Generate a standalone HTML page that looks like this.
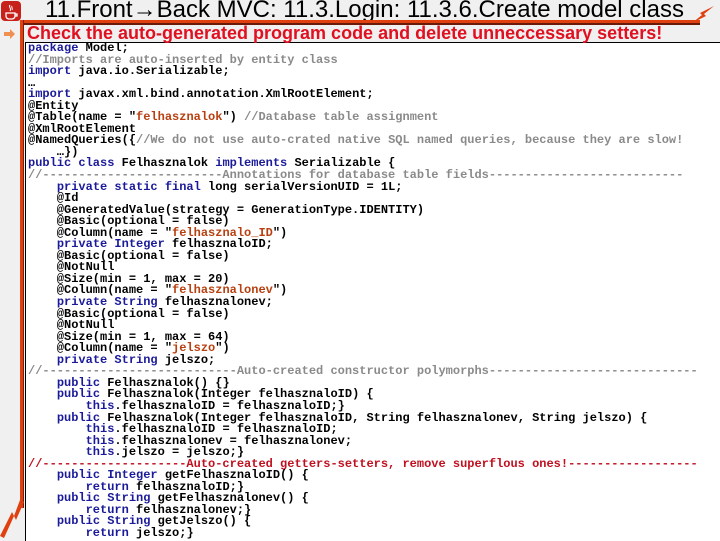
<!DOCTYPE html>
<html><head><meta charset="utf-8"><style>
body{margin:0;width:720px;height:540px;overflow:hidden;background:#f0f0f0;position:relative;font-family:"Liberation Sans",sans-serif}
.title{position:absolute;left:45px;top:-4px;font-size:24px;color:#000;white-space:nowrap}
.hl{position:absolute;left:22px;top:20px;width:678px;height:3px;background:#e04010;border-bottom:2px solid #6a1a08}
.vl{position:absolute;left:20px;top:20px;width:3px;height:488px;background:#e04010;border-right:1px solid #7a2008}
.box{position:absolute;left:25px;top:42px;width:695px;height:498px;background:#fff;border-left:1px solid #000;border-top:1px solid #000}
.sub{position:absolute;left:27px;top:23px;font-size:18px;font-weight:bold;color:#e01020;white-space:nowrap}
pre{position:absolute;left:28px;top:43px;margin:0;font-family:"Liberation Mono",monospace;font-weight:bold;font-size:12px;line-height:11.55px;color:#000}
.k{color:#1a1a9a}.c{color:#8a8a8a}.s{color:#b84010}.r{color:#c01020}
.icon{position:absolute;left:1px;top:1px;width:20px;height:20px;background:#c8201a;border-radius:4px}
</style></head><body>
<div class="icon"><svg width="20" height="20"><path d="M5 12h9v3a3 3 0 0 1-3 3h-3a3 3 0 0 1-3-3z M14 13h2v2h-2" fill="none" stroke="#fff" stroke-width="1.3"/><path d="M9 4c-2 2 2 3 0 6M11 5c-1 1 1 2 0 4" stroke="#fff" fill="none" stroke-width="1"/></svg></div>
<div class="title">11.Front→Back MVC: 11.3.Login: 11.3.6.Create model class</div>
<div class="box"></div>
<div class="hl"></div>
<svg style="position:absolute;left:690px;top:4px" width="30" height="22"><path d="M2 19 L12 11 L10 9 L24 2 L14 10 L16 12 Z" fill="#e04010"/></svg>
<div class="vl"></div>
<svg style="position:absolute;left:0;top:500px" width="26" height="40"><path d="M20 0 L24 2 L16 20 L14 16 L4 38 L0 36 L12 12 L14 16 Z" fill="#e04010"/></svg>
<svg style="position:absolute;left:3px;top:28px" width="14" height="12"><path d="M1 4h6V1l5 5-5 5V8H1z" fill="#f09050"/></svg>
<div class="sub">Check the auto-generated program code and delete unneccessary setters!</div>
<pre><span class="k">package</span> Model;
<span class="c">//Imports are auto-inserted by entity class</span>
<span class="k">import</span> java.io.Serializable;
…
<span class="k">import</span> javax.xml.bind.annotation.XmlRootElement;
@Entity
@Table(name = "<span class="s">felhasznalok</span>") <span class="c">//Database table assignment</span>
@XmlRootElement
@NamedQueries({<span class="c">//We do not use auto-crated native SQL named queries, because they are slow!</span>
    …})
<span class="k">public class</span> Felhasznalok <span class="k">implements</span> Serializable {
<span class="c">//-------------------------Annotations for database table fields---------------------------</span>
    <span class="k">private static final</span> long serialVersionUID = 1L;
    @Id
    @GeneratedValue(strategy = GenerationType.IDENTITY)
    @Basic(optional = false)
    @Column(name = "<span class="s">felhasznalo_ID</span>")
    <span class="k">private Integer</span> felhasznaloID;
    @Basic(optional = false)
    @NotNull
    @Size(min = 1, max = 20)
    @Column(name = "<span class="s">felhasznalonev</span>")
    <span class="k">private String</span> felhasznalonev;
    @Basic(optional = false)
    @NotNull
    @Size(min = 1, max = 64)
    @Column(name = "<span class="s">jelszo</span>")
    <span class="k">private String</span> jelszo;
<span class="c">//---------------------------Auto-created constructor polymorphs-----------------------------</span>
    <span class="k">public</span> Felhasznalok() {}
    <span class="k">public</span> Felhasznalok(Integer felhasznaloID) {
        <span class="k">this</span>.felhasznaloID = felhasznaloID;}
    <span class="k">public</span> Felhasznalok(Integer felhasznaloID, String felhasznalonev, String jelszo) {
        <span class="k">this</span>.felhasznaloID = felhasznaloID;
        <span class="k">this</span>.felhasznalonev = felhasznalonev;
        <span class="k">this</span>.jelszo = jelszo;}
<span class="r">//--------------------Auto-created getters-setters, remove superflous ones!------------------</span>
    <span class="k">public Integer</span> getFelhasznaloID() {
        <span class="k">return</span> felhasznaloID;}
    <span class="k">public String</span> getFelhasznalonev() {
        <span class="k">return</span> felhasznalonev;}
    <span class="k">public String</span> getJelszo() {
        <span class="k">return</span> jelszo;}</pre>
</body></html>
